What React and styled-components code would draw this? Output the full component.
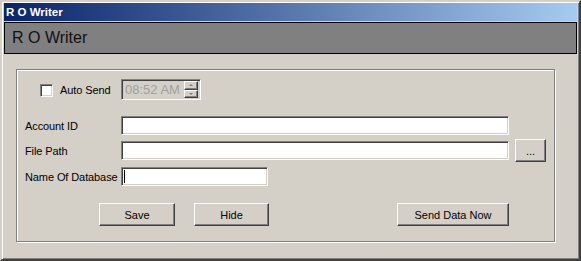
import React from 'react';
import styled, { createGlobalStyle } from 'styled-components';

const GlobalStyle = createGlobalStyle`
  html, body {
    margin: 0;
    padding: 0;
    background: #d4d0c8;
  }
  * {
    box-sizing: border-box;
  }
`;

const Window = styled.div`
  width: 581px;
  height: 261px;
  display: flex;
  flex-direction: column;
  background: #d4d0c8;
  border-style: solid;
  border-width: 2px;
  border-color: #d4d0c8 #404040 #404040 #d4d0c8;
  box-shadow: inset 1px 1px 0 #fff, inset -1px -1px 0 #808080;
  padding: 1px 2px 2px;
  font-family: "Liberation Sans", Arial, sans-serif;
  font-size: 11px;
  color: #000;
`;

const TitleBar = styled.div`
  height: 18px;
  flex: none;
  display: flex;
  align-items: center;
  padding-left: 2px;
  background: linear-gradient(to right, #0a246a, #a6caf0);
  color: #fff;
  font-weight: bold;
  font-size: 11.5px;
`;

const Header = styled.div`
  height: 32px;
  flex: none;
  margin-top: 1px;
  display: flex;
  align-items: center;
  padding-left: 7px;
  background: #808080;
  border: 1px solid #000;
  color: #111;
  font-size: 16px;
`;

const GroupBox = styled.div`
  width: 539px;
  height: 173px;
  margin: 15px 0 0 12px;
  border: 1px solid #808080;
  box-shadow: inset 1px 1px 0 #fff, 1px 1px 0 #fff;
  padding: 9px 0 0 8px;
  display: flex;
  flex-direction: column;
`;

const Row = styled.div`
  display: flex;
  align-items: center;
  height: ${({ $h }) => $h || 19}px;
  margin-top: ${({ $mt }) => $mt || 0}px;
`;

const LabelCell = styled.div`
  width: 96px;
  flex: none;
  display: flex;
  align-items: center;
  white-space: nowrap;
  letter-spacing: -0.1px;
`;

const CheckBox = styled.span`
  width: 13px;
  height: 13px;
  margin: 1px 7px 0 15px;
  background: #fff;
  border-style: solid;
  border-width: 1px;
  border-color: #808080 #fff #fff #808080;
  box-shadow: inset 1px 1px 0 #404040, inset -1px -1px 0 #d4d0c8;
`;

const sunken = `
  border-style: solid;
  border-width: 1px;
  border-color: #808080 #fff #fff #808080;
  box-shadow: inset 1px 1px 0 #404040, inset -1px -1px 0 #d4d0c8;
`;

const TimePicker = styled.div`
  width: 80px;
  height: 21px;
  ${sunken}
  background: #d4d0c8;
  display: flex;
  align-items: center;
  padding: 0 2px 0 3px;
  color: #a0a0a0;
  font-size: 13px;
`;

const TimeText = styled.span`
  flex: 1;
`;

const Spinner = styled.div`
  width: 14px;
  height: 17px;
  display: flex;
  flex-direction: column;
`;

const SpinButton = styled.span`
  flex: 1;
  display: flex;
  align-items: center;
  justify-content: center;
  background: #d4d0c8;
  border-style: solid;
  border-width: 1px;
  border-color: #fff #404040 #404040 #fff;
  box-shadow: inset -1px -1px 0 #808080;
`;

const Arrow = styled.span`
  width: 0;
  height: 0;
  border-left: 2px solid transparent;
  border-right: 2px solid transparent;
  ${({ $down }) => ($down ? 'border-top: 2px solid #808080;' : 'border-bottom: 2px solid #808080;')}
`;

const TextBox = styled.div`
  width: ${({ $w }) => $w}px;
  height: 19px;
  ${sunken}
  background: #fff;
  display: flex;
  align-items: center;
  padding-left: 2px;
`;

const Caret = styled.span`
  width: 1px;
  height: 13px;
  background: #000;
`;

const Button = styled.button`
  width: ${({ $w }) => $w}px;
  height: 23px;
  flex: none;
  padding: 0;
  margin-left: ${({ $ml }) => ($ml === 'auto' ? 'auto' : `${$ml || 0}px`)};
  background: #d4d0c8;
  border-style: solid;
  border-width: 1px;
  border-color: #fff #404040 #404040 #fff;
  box-shadow: inset -1px -1px 0 #808080;
  font-family: "Liberation Sans", Arial, sans-serif;
  font-size: 11px;
  color: #000;
  text-align: center;
`;

const ButtonRow = styled.div`
  width: 484px;
  height: 23px;
  margin-top: 17px;
  display: flex;
  align-items: center;
  padding-left: 74px;
`;

export default function App() {
  return (
    <>
      <GlobalStyle />
      <Window>
        <TitleBar>R O Writer</TitleBar>
        <Header>R O Writer</Header>
        <GroupBox>
          <Row $h={21}>
            <LabelCell>
              <CheckBox />
              Auto Send
            </LabelCell>
            <TimePicker>
              <TimeText>08:52 AM</TimeText>
              <Spinner>
                <SpinButton><Arrow /></SpinButton>
                <SpinButton><Arrow $down /></SpinButton>
              </Spinner>
            </TimePicker>
          </Row>
          <Row $mt={16}>
            <LabelCell>Account ID</LabelCell>
            <TextBox $w={388} />
          </Row>
          <Row $mt={6}>
            <LabelCell>File Path</LabelCell>
            <TextBox $w={388} />
            <Button $w={31} $ml={6}>...</Button>
          </Row>
          <Row $mt={7}>
            <LabelCell>Name Of Database</LabelCell>
            <TextBox $w={147}>
              <Caret />
            </TextBox>
          </Row>
          <ButtonRow>
            <Button $w={76}>Save</Button>
            <Button $w={75} $ml={19}>Hide</Button>
            <Button $w={112} $ml="auto">Send Data Now</Button>
          </ButtonRow>
        </GroupBox>
      </Window>
    </>
  );
}
